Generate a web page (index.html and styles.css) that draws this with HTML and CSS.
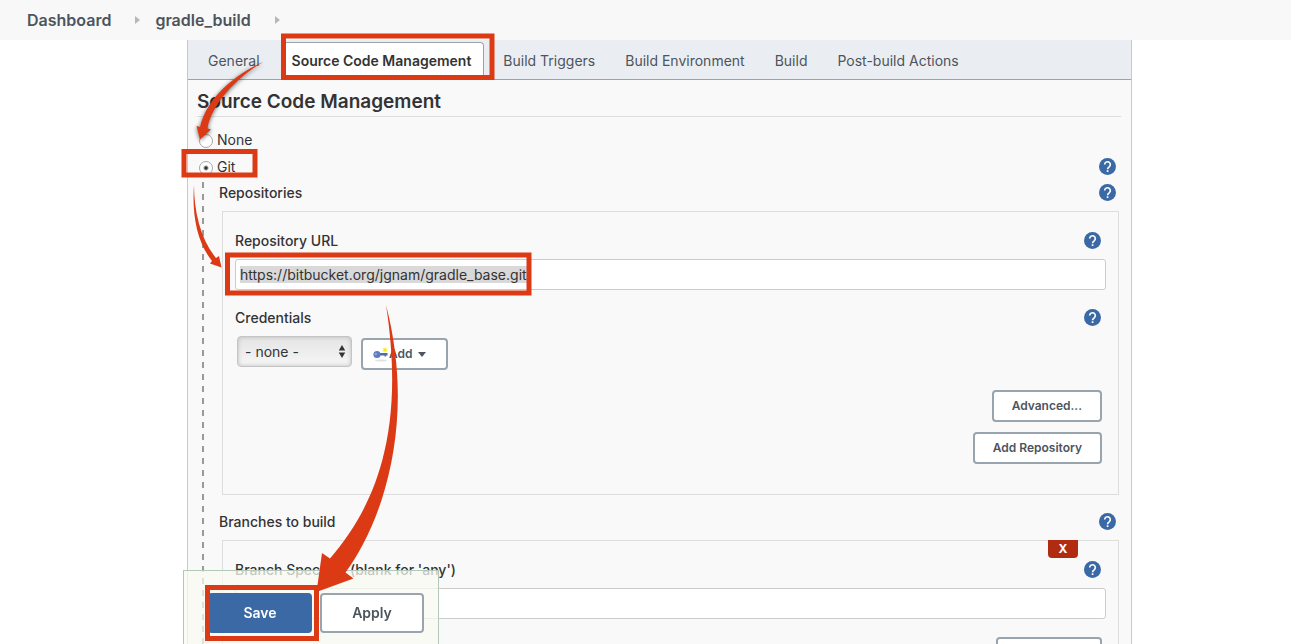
FILE: index.html
```html
<!DOCTYPE html>
<html lang="en">
<head>
<meta charset="utf-8">
<title>gradle_build Config</title>
<link rel="stylesheet" href="styles.css">
</head>
<body>
<svg class="symbols" width="0" height="0" aria-hidden="true">
  <symbol id="help" viewBox="0 0 24 24">
    <circle cx="12" cy="12" r="12" fill="#3b69a5"/>
    <path d="M8 9.2a4 4 0 1 1 6.6 3.1c-1.500 1.200-2.500 1.700-2.500 3.500" fill="none" stroke="#fff" stroke-width="2.300"/>
    <rect x="10.900" y="17.300" width="2.400" height="2.500" fill="#fff"/>
  </symbol>
</svg>
<nav class="breadcrumbs" aria-label="Breadcrumb">
  <a href="#">Dashboard</a>
  <svg class="crumb-arrow" viewBox="0 0 5 8" aria-hidden="true"><path d="M0 0L5 4L0 8Z"/></svg>
  <a href="#">gradle_build</a>
  <svg class="crumb-arrow" viewBox="0 0 5 8" aria-hidden="true"><path d="M0 0L5 4L0 8Z"/></svg>
</nav>
<main class="panel">
  <nav class="tabs" aria-label="Sections">
    <a class="tab" href="#">General</a>
    <a class="tab active" href="#">Source Code Management</a>
    <a class="tab" href="#">Build Triggers</a>
    <a class="tab" href="#">Build Environment</a>
    <a class="tab" href="#">Build</a>
    <a class="tab" href="#">Post-build Actions</a>
  </nav>
  <form class="config">
    <h1 class="title">Source Code Management</h1>
    <div class="row">
      <label class="choice"><input class="radio" type="radio" name="scm"><span>None</span></label>
    </div>
    <div class="row">
      <label class="choice"><input class="radio" type="radio" name="scm" checked><span>Git</span></label>
      <button class="help" type="button" aria-label="Help for Git"><svg viewBox="0 0 24 24"><use href="#help"/></svg></button>
    </div>
    <div class="nested">
      <div class="row">
        <span class="label">Repositories</span>
        <button class="help" type="button" aria-label="Help for Repositories"><svg viewBox="0 0 24 24"><use href="#help"/></svg></button>
      </div>
      <section class="box">
        <div class="row">
          <label class="label" for="url">Repository URL</label>
          <button class="help" type="button" aria-label="Help for Repository URL"><svg viewBox="0 0 24 24"><use href="#help"/></svg></button>
        </div>
        <input class="field" id="url" type="text" value="https://bitbucket.org/jgnam/gradle_base.git">
        <div class="row spaced">
          <label class="label" for="credentials">Credentials</label>
          <button class="help" type="button" aria-label="Help for Credentials"><svg viewBox="0 0 24 24"><use href="#help"/></svg></button>
        </div>
        <div class="credentials">
          <div class="select-wrap">
            <select class="select" id="credentials"><option>- none -</option></select>
            <svg class="updown" viewBox="0 0 8 14" aria-hidden="true"><path d="M4 0L7.500 6H.5ZM4 14L.5 8H7.500Z"/></svg>
          </div>
          <button class="button add" type="button">
            <svg class="key" viewBox="0 0 16 16" aria-hidden="true">
              <ellipse cx="8" cy="14.500" rx="6" ry="1" fill="#e2e2e2"/>
              <circle cx="12" cy="4" r="2.500" fill="#fff36b"/>
              <circle cx="12" cy="4" r="1" fill="#e8e000"/>
              <path d="M6 7H14.500V9.500H13V10.500H11.500V9.500H6Z" fill="#4a6cab"/>
              <circle cx="4" cy="8.500" r="3.600" fill="#5b7dbd"/>
              <circle cx="2.800" cy="8" r="1.200" fill="#8fa8d6"/>
            </svg>
            <span>Add</span>
            <svg class="caret" viewBox="0 0 8 5" aria-hidden="true"><path d="M0 0H8L4 5Z"/></svg>
          </button>
        </div>
        <div class="actions">
          <button class="button" type="button">Advanced...</button>
          <button class="button" type="button">Add Repository</button>
        </div>
      </section>
      <div class="row branches">
        <span class="label">Branches to build</span>
        <button class="help" type="button" aria-label="Help for Branches to build"><svg viewBox="0 0 24 24"><use href="#help"/></svg></button>
      </div>
      <section class="box">
        <button class="remove" type="button">X</button>
        <div class="row">
          <label class="label" for="branch">Branch Specifier (blank for 'any')</label>
          <button class="help" type="button" aria-label="Help for Branch Specifier"><svg viewBox="0 0 24 24"><use href="#help"/></svg></button>
        </div>
        <input class="field" id="branch" type="text">
        <div class="actions compact">
          <button class="button wide" type="button" aria-label="Add branch"></button>
        </div>
      </section>
    </div>
  </form>
</main>
<div class="save-bar">
  <button class="button large primary" type="button">Save</button>
  <button class="button large" type="button">Apply</button>
</div>
<svg class="notes" viewBox="0 0 560 644" aria-hidden="true">
  <g class="frames">
    <rect x="283.500" y="36" width="208.500" height="41.500"/>
    <rect x="184" y="151.500" width="71" height="23.500"/>
    <rect x="227.500" y="255" width="301.500" height="38"/>
    <rect x="207.500" y="587.500" width="109" height="51"/>
  </g>
  <g class="arrows">
    <path class="shadowed" d="M263 62C234 75 207 98 200 127L196.500 126L200 139.500L211 129.500L207.500 128.500C211 105 236 78 263 62Z"/>
    <path d="M194 185C192 212 196 241 212 261L210 263.500L221.500 267.500L219 256L216 258C201 240 194 212 194 185Z"/>
    <path d="M386 305C403 415 385 495 330 558.500L322 553L316.500 592L353.500 578.500L345.500 572.500C384 520 416 420 386 305Z"/>
  </g>
</svg>
<script src="script.js"></script>
</body>
</html>
```
FILE: styles.css
```css
* {
  box-sizing: border-box;
}

body {
  display: flex;
  flex-direction: column;
  margin: 0;
  height: 100vh;
  overflow: hidden;
  background: #fff;
  color: #333;
  font: 14px/20px Inter, "Liberation Sans", sans-serif;
}

button,
input,
select {
  font: inherit;
  color: inherit;
}

a {
  text-decoration: none;
}

.symbols {
  position: absolute;
}

.breadcrumbs {
  display: flex;
  flex: none;
  align-items: center;
  gap: 24px;
  height: 40px;
  padding: 0 27px;
  background: #f8f8f8;
  font-size: 16px;
  font-weight: 600;
}

.breadcrumbs a {
  color: #4d545d;
}

.crumb-arrow {
  width: 5px;
  height: 8px;
  margin-right: -9px;
  fill: #b5b8bb;
}

.panel {
  flex: 1;
  min-height: 0;
  margin: 0 159px 0 187px;
  overflow-y: auto;
  scrollbar-width: none;
  border: solid #c8c9cb;
  border-width: 0 1px;
  background: #f9f9f9;
}

.tabs {
  display: flex;
  gap: 8px;
  height: 40px;
  padding: 2px 9px 0;
  background: #eaeef2;
  border-bottom: 1px solid #98a4ae;
}

.tab {
  padding: 8px 10px 0;
  border: 1px solid transparent;
  border-bottom: 0;
  color: #4d545d;
  white-space: nowrap;
}

.tab.active {
  margin-left: 4px;
  padding: 8px 12px 0 8px;
  background: #fff;
  border-color: #98a4ae;
  border-radius: 4px 4px 0 0;
  color: #333;
  font-weight: 600;
}

.config {
  padding: 6px 10px 40px 9px;
}

.title {
  margin: 0 0 10px;
  padding-top: 1px;
  border-bottom: 1px solid #ddd;
  font-size: 19px;
  line-height: 29px;
  font-weight: 600;
}

.row {
  display: flex;
  align-items: center;
  justify-content: space-between;
  height: 26px;
  padding-right: 5px;
}

.row + .row {
  margin-top: 1px;
}

.spaced {
  margin-top: 15px;
}

.branches {
  margin-top: 14px;
}

.label {
  font-weight: 500;
}

.choice {
  display: flex;
  align-items: center;
  gap: 4px;
  padding-left: 2px;
}

.radio {
  appearance: none;
  width: 14px;
  height: 14px;
  margin: 1px 0 0;
  border: 1px solid #a8a8a8;
  border-radius: 50%;
  background: #fff;
}

.radio:checked {
  background: radial-gradient(circle, #333 0 1px, #fff 3px);
}

.help {
  width: 17px;
  height: 17px;
  margin-bottom: 2px;
  padding: 0;
  border: 0;
  background: none;
}

.help svg {
  display: block;
}

.nested {
  padding-left: 22px;
  background: repeating-linear-gradient(transparent 0 2px, #999 2px 8px, transparent 8px 12px) 5px 0 / 2px 100% no-repeat;
}

.box {
  position: relative;
  margin: 5px 2px 0 3px;
  padding: 16px 12px 30px;
  border: 1px solid #ddd;
}

.field {
  display: block;
  width: 100%;
  height: 31px;
  margin: 5px 0 0;
  padding: 0 4px;
  border: 1px solid #ccc;
  border-radius: 3px;
  background: #fff;
  outline: 0;
}

.field::selection {
  background: #d9d9d9;
  color: #333;
}

.credentials {
  display: flex;
  align-items: flex-start;
  gap: 9px;
  margin: 5px 0 0 2px;
}

.select-wrap {
  position: relative;
  width: 115px;
}

.select {
  appearance: none;
  width: 100%;
  height: 31px;
  padding: 0 7px;
  border: 1px solid #c4c4c4;
  border-radius: 4px;
  background: linear-gradient(#e4e4e4, #f6f6f6);
  box-shadow: inset 0 0 4px #bbb;
}

.updown {
  position: absolute;
  top: 9px;
  right: 6px;
  width: 8px;
  height: 13px;
  fill: #333;
}

.button {
  height: 32px;
  padding: 0 18px;
  border: 2px solid #98a4ae;
  border-radius: 4px;
  background: #fff;
  color: #4d545d;
  font-size: 12px;
  font-weight: 600;
}

.add {
  display: flex;
  align-items: center;
  width: 87px;
  margin-top: 2px;
  padding: 0 10px;
}

.wide {
  width: 106px;
}

.key {
  width: 16px;
  height: 16px;
}

.caret {
  width: 8px;
  height: 5px;
  margin-left: 5px;
  fill: #4d545d;
}

.actions {
  display: flex;
  flex-direction: column;
  align-items: flex-end;
  gap: 10px;
  margin: 20px 4px 0 0;
}

.compact {
  margin-top: 18px;
}

.remove {
  position: absolute;
  top: -1px;
  right: 40px;
  width: 30px;
  height: 18px;
  padding: 0;
  border: 0;
  border-radius: 0 0 4px 4px;
  background: #b12b10;
  color: #fff;
  font-size: 12px;
  line-height: 18px;
  font-weight: 700;
}

.save-bar {
  position: fixed;
  left: 183px;
  bottom: 0;
  display: flex;
  gap: 8px;
  padding: 22px 14px 11px 24px;
  border: 1px solid #b3c8b8;
  border-bottom: 0;
  background: rgba(248, 250, 241, 0.75);
}

.large {
  width: 104px;
  height: 40px;
  font-size: 14px;
}

.primary {
  border-color: #3b69a5;
  background: #3b69a5;
  color: #fff;
}

.notes {
  position: absolute;
  top: 0;
  left: 0;
  width: 560px;
  height: 644px;
  pointer-events: none;
}

.frames {
  fill: none;
  stroke: #dc3a14;
  stroke-width: 5px;
}

.arrows {
  fill: #dc3a14;
}

.shadowed {
  filter: drop-shadow(0 1px 2px rgba(0, 0, 0, 0.6));
}
```
FILE: script.js
```js
const url = document.getElementById("url");
url.focus({ preventScroll: true });
url.select();
```
